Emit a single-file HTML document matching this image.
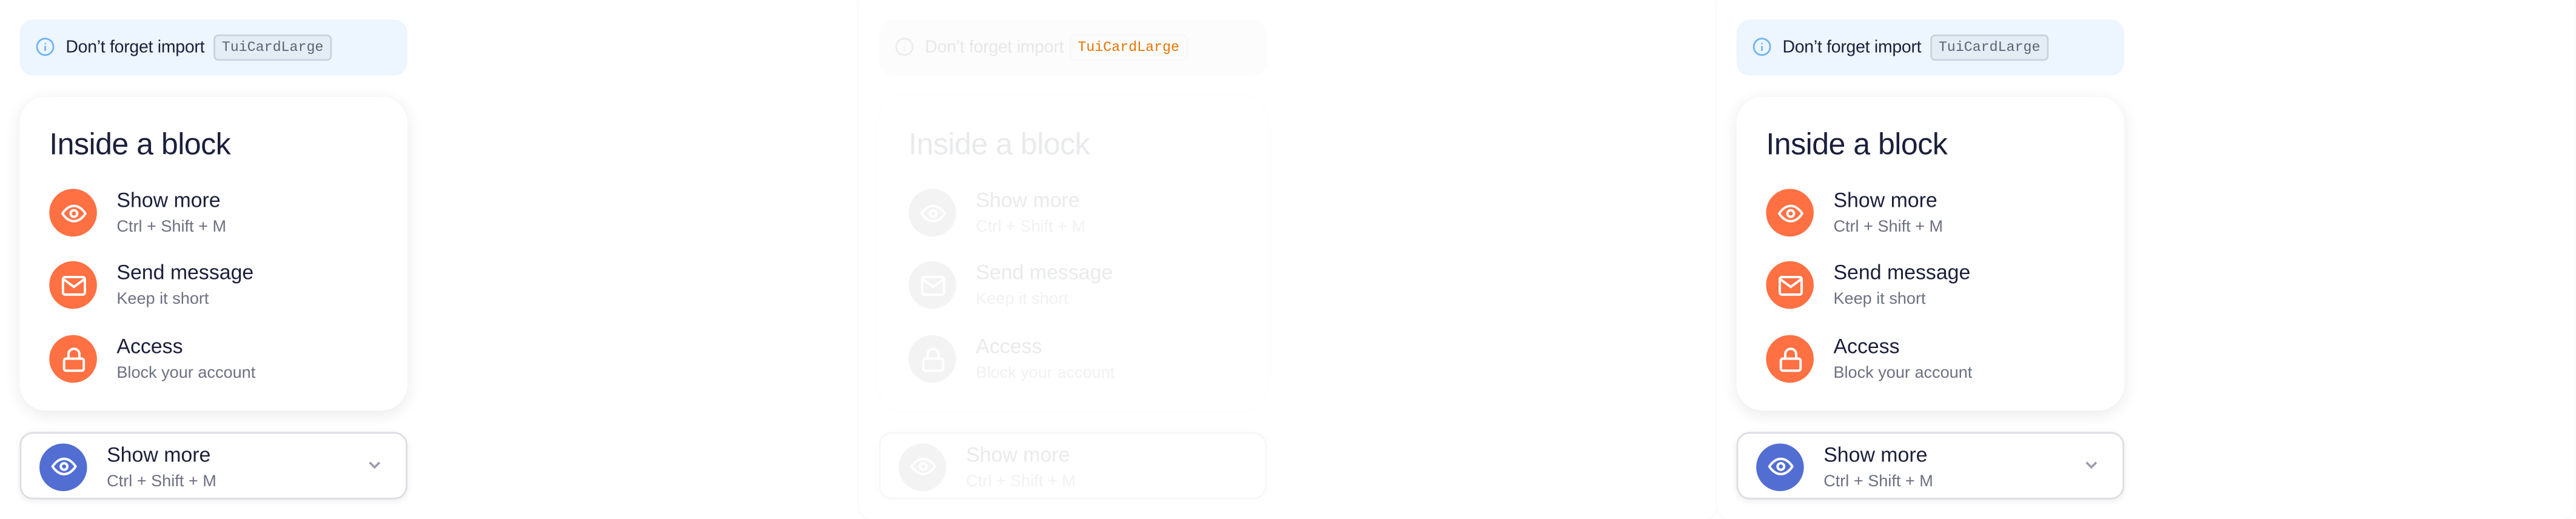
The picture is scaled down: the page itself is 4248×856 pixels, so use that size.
<!DOCTYPE html>
<html><head><meta charset="utf-8">
<style>
html,body{margin:0;padding:0;background:#fff;width:4248px;height:856px;overflow:hidden}
#root{position:absolute;left:0;top:0;width:1568px;height:316px;transform:scale(2.70918);transform-origin:0 0;font-family:"Liberation Sans",sans-serif}
.panel{position:absolute;top:0;width:522px;height:316px}
.note{position:absolute;left:12px;top:12px;width:236px;height:34px;background:#edf5fe;border-radius:8px}
.note .ic{position:absolute;left:10px;top:11px;width:11px;height:11px;border:1.3px solid #6cb3f7;border-radius:50%;box-sizing:border-box}
.note .ic:before{content:"";position:absolute;left:3.6px;top:1.5px;width:1.4px;height:1.4px;background:#6cb3f7;border-radius:50%}
.note .ic:after{content:"";position:absolute;left:3.6px;top:3.8px;width:1.4px;height:3.6px;background:#6cb3f7}
.note .t{position:absolute;left:28px;top:11px;font-size:10.5px;color:#1b1f3b;letter-spacing:-0.1px}
.note .code{position:absolute;left:118px;top:9px;height:16px;padding:0 4px;background:#e4ecf6;border:1px solid #c8d2de;border-radius:3px;box-sizing:border-box;font-family:"Liberation Mono",monospace;font-size:8.6px;line-height:14px;color:#5c6372}
.card{position:absolute;left:12px;top:59px;width:236px;height:191px;background:#fff;border-radius:16px;box-shadow:0 2px 10px rgba(0,0,0,.09)}
.card h1{position:absolute;left:18px;top:18px;margin:0;font-weight:400;font-size:18.5px;color:#1b1f3b;letter-spacing:-0.2px}
.item{position:absolute;left:18px;width:210px;height:30px}
.circ{position:absolute;left:0;top:0;width:29px;height:29px;border-radius:50%;background:#ff7043}
.circ svg{position:absolute;left:6.5px;top:6.5px}
.item .a{position:absolute;left:41px;top:0px;font-size:12.5px;color:#1b1f3b;white-space:nowrap}
.item .b{position:absolute;left:41px;top:18px;font-size:10px;color:#6d7082;white-space:nowrap}
.acc{position:absolute;left:12px;top:263px;width:236px;height:41px;background:#fff;border:1px solid #dcdde2;border-radius:8px;box-sizing:border-box;box-shadow:0 1px 4px rgba(0,0,0,.08)}
.acc .circ{left:11px;top:5.5px;background:#526ed3}
.acc .a{position:absolute;left:52px;top:6px;font-size:12.5px;color:#1b1f3b}
.acc .b{position:absolute;left:52px;top:23.5px;font-size:10px;color:#6d7082}
.acc .chev{position:absolute;left:210px;top:14px}
.faded .note{background:#fcfcfc}
.faded .fade{opacity:.09}
.faded .card,.faded .acc{box-shadow:0 0 8px rgba(0,0,0,.015);border-color:#f7f7f7}
.faded .circ{background:#888}
.pedge{position:absolute;top:0;width:522px;height:316px;border-radius:0 0 8px 8px;box-shadow:0 0 2px rgba(0,0,0,.05)}
</style></head><body>
<div id="root">
<div class="pedge" style="left:523px;background:#fff"></div>
<div class="pedge" style="left:1045px;background:#fff"></div>

<!-- LEFT -->
<div class="panel" style="left:0">
 <div class="note"><div class="ic"></div><div class="t">Don’t forget import</div><div class="code">TuiCardLarge</div></div>
 <div class="card">
  <h1>Inside a block</h1>
  <div class="item" style="top:56px"><div class="circ"><svg width="16" height="16" viewBox="0 0 24 24" fill="none" stroke="#fff" stroke-width="2.2"><path d="M1.5 12s4-7 10.5-7 10.5 7 10.5 7-4 7-10.5 7S1.5 12 1.5 12z"/><circle cx="12" cy="12" r="3"/></svg></div><div class="a">Show more</div><div class="b">Ctrl + Shift + M</div></div>
  <div class="item" style="top:100px"><div class="circ"><svg width="16" height="16" viewBox="0 0 24 24" fill="none" stroke="#fff" stroke-width="2.2"><rect x="2" y="4" width="20" height="16" rx="2"/><path d="M2.5 6l9.5 7 9.5-7"/></svg></div><div class="a">Send message</div><div class="b">Keep it short</div></div>
  <div class="item" style="top:145px"><div class="circ"><svg width="16" height="16" viewBox="0 0 24 24" fill="none" stroke="#fff" stroke-width="2.2"><rect x="3" y="11" width="18" height="11" rx="2"/><path d="M7 11V7a5 5 0 0 1 10 0v4"/></svg></div><div class="a">Access</div><div class="b">Block your account</div></div>
 </div>
 <div class="acc"><div class="circ"><svg width="16" height="16" viewBox="0 0 24 24" fill="none" stroke="#fff" stroke-width="2.2"><path d="M1.5 12s4-7 10.5-7 10.5 7 10.5 7-4 7-10.5 7S1.5 12 1.5 12z"/><circle cx="12" cy="12" r="3"/></svg></div><div class="a">Show more</div><div class="b">Ctrl + Shift + M</div>
 <svg class="chev" width="10" height="10" viewBox="0 0 10 10"><path d="M2 3.5l3 3 3-3" fill="none" stroke="#9a9bab" stroke-width="1.3"/></svg></div>
</div>

<!-- MIDDLE (faded) -->
<div class="panel faded" style="left:523px">
 <div class="note"><div class="fade"><div class="ic" style="border-color:#555"></div><div class="t">Don’t forget import</div></div><div class="code" style="background:#fcfcfc;border-color:#f8f8f8;color:#e87400;left:116px">TuiCardLarge</div></div>
 <div class="card"><div class="fade">
  <h1>Inside a block</h1>
  <div class="item" style="top:56px"><div class="circ"><svg width="16" height="16" viewBox="0 0 24 24" fill="none" stroke="#fff" stroke-width="2.2"><path d="M1.5 12s4-7 10.5-7 10.5 7 10.5 7-4 7-10.5 7S1.5 12 1.5 12z"/><circle cx="12" cy="12" r="3"/></svg></div><div class="a">Show more</div><div class="b">Ctrl + Shift + M</div></div>
  <div class="item" style="top:100px"><div class="circ"><svg width="16" height="16" viewBox="0 0 24 24" fill="none" stroke="#fff" stroke-width="2.2"><rect x="2" y="4" width="20" height="16" rx="2"/><path d="M2.5 6l9.5 7 9.5-7"/></svg></div><div class="a">Send message</div><div class="b">Keep it short</div></div>
  <div class="item" style="top:145px"><div class="circ"><svg width="16" height="16" viewBox="0 0 24 24" fill="none" stroke="#fff" stroke-width="2.2"><rect x="3" y="11" width="18" height="11" rx="2"/><path d="M7 11V7a5 5 0 0 1 10 0v4"/></svg></div><div class="a">Access</div><div class="b">Block your account</div></div>
 </div></div>
 <div class="acc"><div class="fade"><div class="circ"><svg width="16" height="16" viewBox="0 0 24 24" fill="none" stroke="#fff" stroke-width="2.2"><path d="M1.5 12s4-7 10.5-7 10.5 7 10.5 7-4 7-10.5 7S1.5 12 1.5 12z"/><circle cx="12" cy="12" r="3"/></svg></div><div class="a">Show more</div><div class="b">Ctrl + Shift + M</div></div></div>
</div>

<!-- RIGHT -->
<div class="panel" style="left:1045px">
 <div class="note"><div class="ic"></div><div class="t">Don’t forget import</div><div class="code">TuiCardLarge</div></div>
 <div class="card">
  <h1>Inside a block</h1>
  <div class="item" style="top:56px"><div class="circ"><svg width="16" height="16" viewBox="0 0 24 24" fill="none" stroke="#fff" stroke-width="2.2"><path d="M1.5 12s4-7 10.5-7 10.5 7 10.5 7-4 7-10.5 7S1.5 12 1.5 12z"/><circle cx="12" cy="12" r="3"/></svg></div><div class="a">Show more</div><div class="b">Ctrl + Shift + M</div></div>
  <div class="item" style="top:100px"><div class="circ"><svg width="16" height="16" viewBox="0 0 24 24" fill="none" stroke="#fff" stroke-width="2.2"><rect x="2" y="4" width="20" height="16" rx="2"/><path d="M2.5 6l9.5 7 9.5-7"/></svg></div><div class="a">Send message</div><div class="b">Keep it short</div></div>
  <div class="item" style="top:145px"><div class="circ"><svg width="16" height="16" viewBox="0 0 24 24" fill="none" stroke="#fff" stroke-width="2.2"><rect x="3" y="11" width="18" height="11" rx="2"/><path d="M7 11V7a5 5 0 0 1 10 0v4"/></svg></div><div class="a">Access</div><div class="b">Block your account</div></div>
 </div>
 <div class="acc"><div class="circ"><svg width="16" height="16" viewBox="0 0 24 24" fill="none" stroke="#fff" stroke-width="2.2"><path d="M1.5 12s4-7 10.5-7 10.5 7 10.5 7-4 7-10.5 7S1.5 12 1.5 12z"/><circle cx="12" cy="12" r="3"/></svg></div><div class="a">Show more</div><div class="b">Ctrl + Shift + M</div>
 <svg class="chev" width="10" height="10" viewBox="0 0 10 10"><path d="M2 3.5l3 3 3-3" fill="none" stroke="#9a9bab" stroke-width="1.3"/></svg></div>
</div>
</div>
</body></html>
